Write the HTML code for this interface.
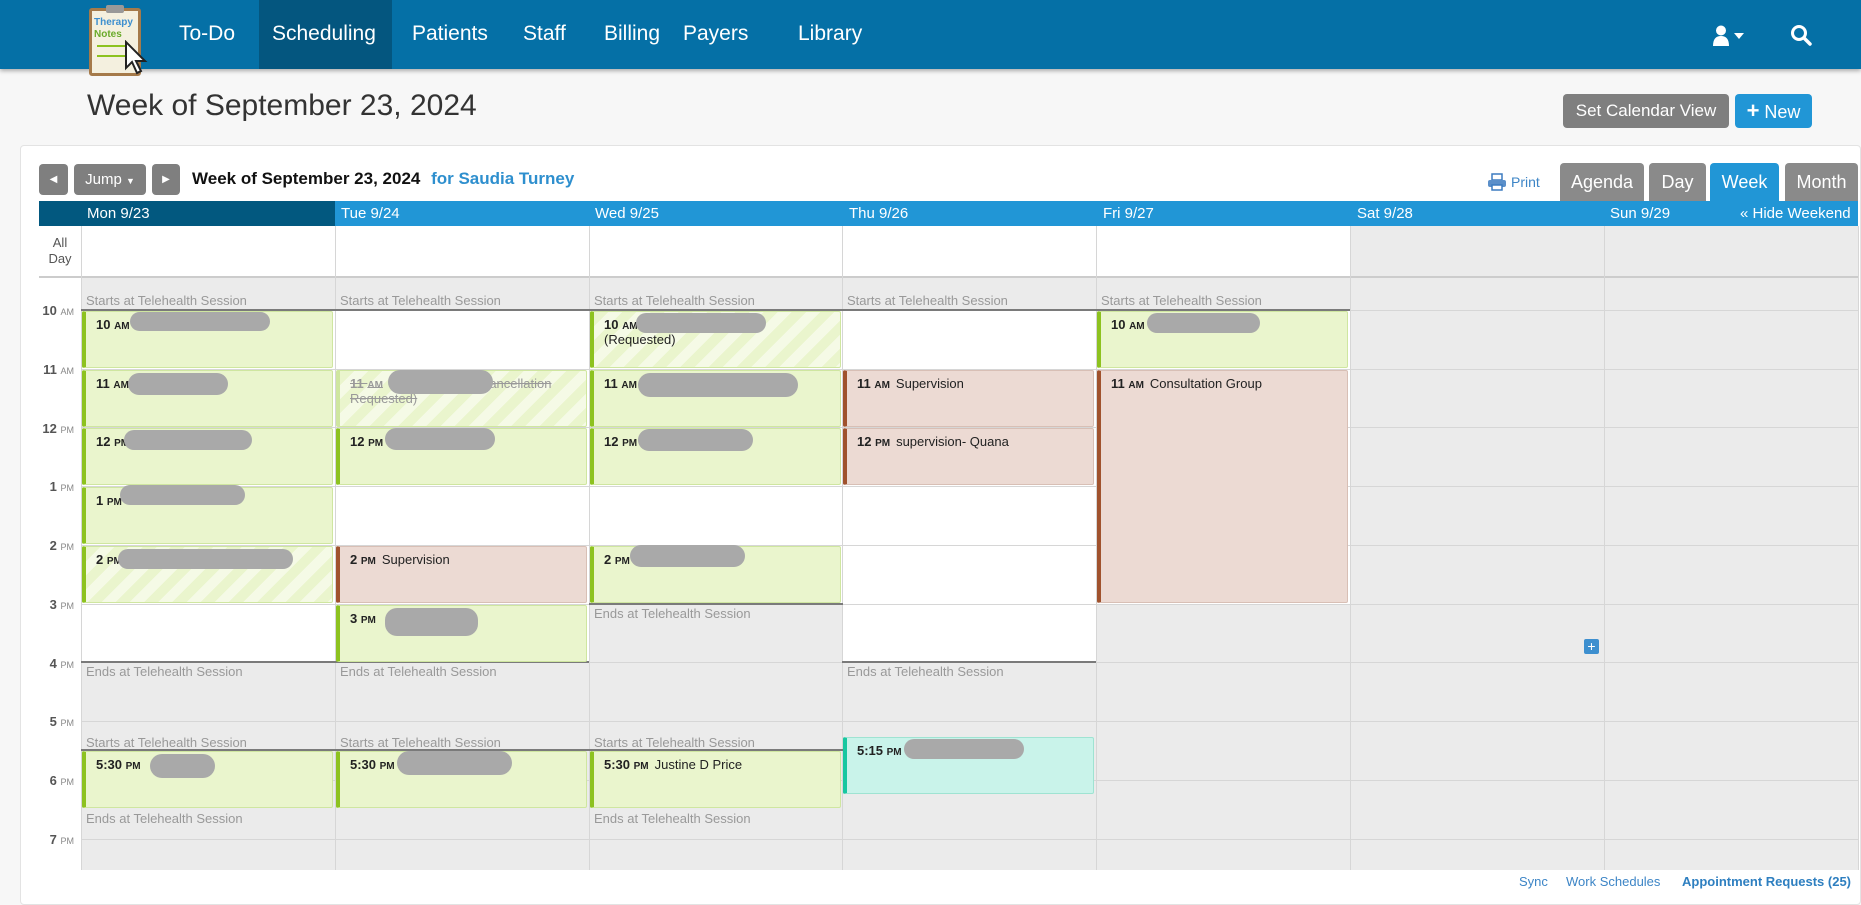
<!DOCTYPE html>
<html><head><meta charset="utf-8"><style>
*{margin:0;padding:0;box-sizing:border-box}
body{width:1861px;height:894px;overflow:hidden;background:#f7f7f7;font-family:"Liberation Sans",Arial,sans-serif;position:relative;color:#222}
.a{position:absolute}
.nav{left:0;top:0;width:1861px;height:69px;background:#0570a6;box-shadow:0 2px 4px rgba(0,0,0,.3)}
.nav .it{position:absolute;top:22px;color:#fff;font-size:21px}
.card{left:20px;top:145px;width:1841px;height:760px;background:#fff;border:1px solid #e3e3e3;border-radius:4px}
.btn{position:absolute;background:#7f7f7f;color:#fff;border-radius:4px;font-size:15px;text-align:center}
.tab{position:absolute;top:163px;height:38px;background:#8a8a8a;color:#fff;font-size:18px;text-align:center;line-height:38px;border-radius:4px 4px 0 0}
.hd{position:absolute;top:201px;height:25px;color:#fff;font-size:15px;line-height:25px}
.vl{position:absolute;width:1px;background:#d6d6d6}
.hl{position:absolute;height:1px;background:#d6d6d6}
.wh{position:absolute;background:#fff;width:253px}
.dk{position:absolute;height:2px;background:#7a7a7a;width:254px}
.lb{position:absolute;color:#999;font-size:13px;white-space:nowrap}
.hr{position:absolute;left:40px;font-size:13px;color:#555;width:34px;text-align:right}
.hr small{font-size:9px;color:#888}
.ev{position:absolute;width:251px;height:57px;font-size:13px;padding:5px 0 0 10px;border:1px solid #cfe6a0;border-left:4px solid #8dc21f;background:#eaf5cd;border-radius:2px;overflow:hidden}
.ev b{font-size:13px;margin-right:6px}
.ev b small{font-size:10px}
.st{background:repeating-linear-gradient(135deg,#eaf5cd 0 10px,#f4faе4 10px 20px);background:repeating-linear-gradient(135deg,#eaf5cd 0 10px,#f5fae6 10px 20px)}
.br{background:#ecdad3;border-color:#d8bfb5;border-left-color:#a0522d}
.tl{background:#c9f3ea;border-color:#9fe3d2;border-left-color:#17c7a0}
.bl{position:absolute;background:#a9a9a9;border-radius:12px;height:18px}
</style></head><body>
<div class="a nav">
 <div class="a" style="left:259px;top:0;width:133px;height:69px;background:#04567f"></div>
 <div class="a" style="left:89px;top:8px;width:52px;height:68px;background:#f4f0df;border:3px solid #a57a4a;border-radius:3px">
  <div class="a" style="left:14px;top:-6px;width:18px;height:8px;background:#999;border-radius:2px"></div>
  <div class="a" style="left:2px;top:6px;font-size:10px;color:#3d8fcf;font-weight:bold;line-height:12px">Therapy<br><span style="color:#6aaa2a">Notes</span></div>
  <div class="a" style="left:5px;top:34px;width:30px;height:2px;background:#8dc21f"></div>
  <div class="a" style="left:5px;top:44px;width:30px;height:2px;background:#8dc21f"></div>
 </div>
 <svg class="a" style="left:124px;top:40px" width="26" height="36" viewBox="0 0 26 36"><path d="M2 2 L2 28 L8 22 L13 33 L17 31 L12 21 L21 21 Z" fill="#fff" stroke="#222" stroke-width="2"/></svg>
 <div class="it" style="left:179px">To-Do</div>
 <div class="it" style="left:272px">Scheduling</div>
 <div class="it" style="left:412px">Patients</div>
 <div class="it" style="left:523px">Staff</div>
 <div class="it" style="left:604px">Billing</div>
 <div class="it" style="left:683px">Payers</div>
 <div class="it" style="left:798px">Library</div>
 <svg class="a" style="left:1712px;top:25px" width="36" height="22" viewBox="0 0 36 22"><circle cx="9" cy="5.5" r="5" fill="#fff"/><path d="M1 21 Q1 11 9 11 Q17 11 17 21 Z" fill="#fff"/><path d="M22 8 L32 8 L27 14 Z" fill="#fff"/></svg>
 <svg class="a" style="left:1790px;top:24px" width="22" height="22" viewBox="0 0 22 22"><circle cx="9" cy="9" r="6.5" fill="none" stroke="#fff" stroke-width="3"/><path d="M14 14 L20 20" stroke="#fff" stroke-width="3.5" stroke-linecap="round"/></svg>
</div>
<div class="a" style="left:87px;top:89px;font-size:30px;color:#333;font-weight:300">Week of September 23, 2024</div>
<div class="btn" style="left:1563px;top:94px;width:166px;height:34px;line-height:34px;font-size:17px">Set Calendar View</div>
<div class="btn" style="left:1735px;top:94px;width:77px;height:34px;line-height:34px;font-size:18px;background:#2196d6"><b style="font-size:22px">+</b> New</div>
<div class="a card"></div>
<div class="btn" style="left:39px;top:164px;width:29px;height:31px;line-height:31px;font-size:10px">&#9664;</div>
<div class="btn" style="left:74px;top:164px;width:72px;height:31px;line-height:31px">Jump <span style="font-size:9px">&#9660;</span></div>
<div class="btn" style="left:152px;top:164px;width:28px;height:31px;line-height:31px;font-size:10px">&#9654;</div>
<div class="a" style="left:192px;top:169px;font-size:17px;font-weight:bold;color:#111">Week of September 23, 2024 <span style="color:#2e8fce;margin-left:6px">for Saudia Turney</span></div>
<svg class="a" style="left:1487px;top:173px" width="20" height="18" viewBox="0 0 20 18"><rect x="5" y="1" width="10" height="6" fill="none" stroke="#3d7cc0" stroke-width="1.5"/><rect x="1" y="7" width="18" height="7" rx="2" fill="#5b8fc9"/><rect x="5" y="12" width="10" height="5" fill="#fff" stroke="#3d7cc0" stroke-width="1.5"/></svg>
<div class="a" style="left:1511px;top:174px;font-size:14px;color:#3d85c6">Print</div>
<div class="tab" style="left:1560px;width:84px">Agenda</div>
<div class="tab" style="left:1649px;width:57px">Day</div>
<div class="tab" style="left:1710px;width:69px;background:#2196d6">Week</div>
<div class="tab" style="left:1785px;width:73px">Month</div>
<div class="a" style="left:39px;top:201px;width:1819px;height:25px;background:#2196d6"></div>
<div class="a" style="left:39px;top:201px;width:296px;height:25px;background:#02587f"></div>
<div class="hd" style="left:87px">Mon 9/23</div><div class="hd" style="left:341px">Tue 9/24</div><div class="hd" style="left:595px">Wed 9/25</div><div class="hd" style="left:849px">Thu 9/26</div><div class="hd" style="left:1103px">Fri 9/27</div><div class="hd" style="left:1357px">Sat 9/28</div><div class="hd" style="left:1610px">Sun 9/29</div>
<div class="hd" style="left:1740px">&laquo; Hide Weekend</div>
<div class="a" style="left:39px;top:226px;width:1819px;height:644px;background:#ebebeb"></div>
<div class="a" style="left:39px;top:226px;width:42px;height:644px;background:#fff"></div>
<div class="a" style="left:81px;top:226px;width:1269px;height:51px;background:#fff"></div>
<div class="a" style="left:45px;top:235px;font-size:13px;color:#555;text-align:center;width:30px;line-height:16px">All<br>Day</div>
<div class="wh" style="left:82px;top:310px;height:352px"></div>
<div class="wh" style="left:336px;top:310px;height:352px"></div>
<div class="wh" style="left:590px;top:310px;height:294px"></div>
<div class="wh" style="left:843px;top:310px;height:352px"></div>
<div class="wh" style="left:1097px;top:310px;height:294px"></div>
<div class="hl" style="left:39px;top:276px;width:1819px;height:2px;background:#ccc"></div>
<div class="hl" style="left:81px;top:369px;width:1777px"></div><div class="hl" style="left:81px;top:427px;width:1777px"></div><div class="hl" style="left:81px;top:486px;width:1777px"></div><div class="hl" style="left:81px;top:545px;width:1777px"></div><div class="hl" style="left:81px;top:604px;width:1777px"></div><div class="hl" style="left:81px;top:662px;width:1777px"></div><div class="hl" style="left:81px;top:721px;width:1777px"></div><div class="hl" style="left:81px;top:780px;width:1777px"></div><div class="hl" style="left:81px;top:839px;width:1777px"></div>
<div class="hl" style="left:1350px;top:310px;width:508px"></div>
<div class="vl" style="left:81px;top:226px;height:644px"></div><div class="vl" style="left:335px;top:226px;height:644px"></div><div class="vl" style="left:589px;top:226px;height:644px"></div><div class="vl" style="left:842px;top:226px;height:644px"></div><div class="vl" style="left:1096px;top:226px;height:644px"></div><div class="vl" style="left:1350px;top:226px;height:644px"></div><div class="vl" style="left:1604px;top:226px;height:644px"></div><div class="vl" style="left:1858px;top:226px;height:644px"></div>
<div class="dk" style="left:81px;top:309px"></div><div class="dk" style="left:335px;top:309px"></div><div class="dk" style="left:589px;top:309px"></div><div class="dk" style="left:842px;top:309px"></div><div class="dk" style="left:1096px;top:309px"></div>
<div class="dk" style="left:81px;top:661px"></div><div class="dk" style="left:335px;top:661px"></div><div class="dk" style="left:842px;top:661px"></div><div class="dk" style="left:589px;top:603px"></div>
<div class="dk" style="left:81px;top:749px"></div><div class="dk" style="left:335px;top:749px"></div><div class="dk" style="left:589px;top:749px"></div>
<div class="lb" style="left:86px;top:293px">Starts at Telehealth Session</div><div class="lb" style="left:340px;top:293px">Starts at Telehealth Session</div><div class="lb" style="left:594px;top:293px">Starts at Telehealth Session</div><div class="lb" style="left:847px;top:293px">Starts at Telehealth Session</div><div class="lb" style="left:1101px;top:293px">Starts at Telehealth Session</div>
<div class="lb" style="left:86px;top:664px">Ends at Telehealth Session</div><div class="lb" style="left:340px;top:664px">Ends at Telehealth Session</div><div class="lb" style="left:847px;top:664px">Ends at Telehealth Session</div><div class="lb" style="left:594px;top:606px">Ends at Telehealth Session</div>
<div class="lb" style="left:86px;top:735px">Starts at Telehealth Session</div><div class="lb" style="left:340px;top:735px">Starts at Telehealth Session</div><div class="lb" style="left:594px;top:735px">Starts at Telehealth Session</div>
<div class="lb" style="left:86px;top:811px">Ends at Telehealth Session</div><div class="lb" style="left:594px;top:811px">Ends at Telehealth Session</div>
<div class="hr" style="top:303px"><b>10</b> <small>AM</small></div><div class="hr" style="top:362px"><b>11</b> <small>AM</small></div><div class="hr" style="top:421px"><b>12</b> <small>PM</small></div><div class="hr" style="top:479px"><b>1</b> <small>PM</small></div><div class="hr" style="top:538px"><b>2</b> <small>PM</small></div><div class="hr" style="top:597px"><b>3</b> <small>PM</small></div><div class="hr" style="top:656px"><b>4</b> <small>PM</small></div><div class="hr" style="top:714px"><b>5</b> <small>PM</small></div><div class="hr" style="top:773px"><b>6</b> <small>PM</small></div><div class="hr" style="top:832px"><b>7</b> <small>PM</small></div>
<div class="ev" style="left:82px;top:311px"><b>10 <small>AM</small></b></div>
<div class="ev" style="left:82px;top:370px"><b>11 <small>AM</small></b></div>
<div class="ev" style="left:82px;top:428px"><b>12 <small>PM</small></b></div>
<div class="ev" style="left:82px;top:487px"><b>1 <small>PM</small></b></div>
<div class="ev st" style="left:82px;top:546px"><b>2 <small>PM</small></b></div>
<div class="ev st" style="left:336px;top:370px;color:#999;text-decoration:line-through;border-left-color:#cfe6a0"><b>11 <small>AM</small></b> &nbsp; &nbsp; &nbsp; &nbsp; &nbsp; &nbsp; &nbsp; &nbsp; &nbsp; &nbsp; &nbsp; &nbsp;(Cancellation<br>Requested)</div>
<div class="ev" style="left:336px;top:428px"><b>12 <small>PM</small></b></div>
<div class="ev br" style="left:336px;top:546px"><b>2 <small>PM</small></b>Supervision</div>
<div class="ev" style="left:336px;top:605px"><b>3 <small>PM</small></b></div>
<div class="ev st" style="left:590px;top:311px"><b>10 <small>AM</small></b><br>(Requested)</div>
<div class="ev" style="left:590px;top:370px"><b>11 <small>AM</small></b></div>
<div class="ev" style="left:590px;top:428px"><b>12 <small>PM</small></b></div>
<div class="ev" style="left:590px;top:546px"><b>2 <small>PM</small></b></div>
<div class="ev br" style="left:843px;top:370px"><b>11 <small>AM</small></b>Supervision</div>
<div class="ev br" style="left:843px;top:428px"><b>12 <small>PM</small></b>supervision- Quana</div>
<div class="ev tl" style="left:843px;top:737px"><b>5:15 <small>PM</small></b></div>
<div class="ev" style="left:1097px;top:311px"><b>10 <small>AM</small></b></div>
<div class="ev br" style="left:1097px;top:370px;height:233px"><b>11 <small>AM</small></b>Consultation Group</div>
<div class="ev" style="left:82px;top:751px"><b>5:30 <small>PM</small></b></div>
<div class="ev" style="left:336px;top:751px"><b>5:30 <small>PM</small></b></div>
<div class="ev" style="left:590px;top:751px"><b>5:30 <small>PM</small></b>Justine D Price</div>
<div class="bl" style="left:130px;top:312px;width:140px;height:19px"></div>
<div class="bl" style="left:128px;top:373px;width:100px;height:22px"></div>
<div class="bl" style="left:124px;top:430px;width:128px;height:20px"></div>
<div class="bl" style="left:120px;top:485px;width:125px;height:20px"></div>
<div class="bl" style="left:118px;top:549px;width:175px;height:20px"></div>
<div class="bl" style="left:388px;top:370px;width:105px;height:24px"></div>
<div class="bl" style="left:385px;top:428px;width:110px;height:22px"></div>
<div class="bl" style="left:385px;top:608px;width:93px;height:28px"></div>
<div class="bl" style="left:636px;top:313px;width:130px;height:20px"></div>
<div class="bl" style="left:638px;top:373px;width:160px;height:24px"></div>
<div class="bl" style="left:638px;top:429px;width:115px;height:22px"></div>
<div class="bl" style="left:630px;top:545px;width:115px;height:22px"></div>
<div class="bl" style="left:904px;top:739px;width:120px;height:20px"></div>
<div class="bl" style="left:1147px;top:313px;width:113px;height:20px"></div>
<div class="bl" style="left:150px;top:754px;width:65px;height:24px"></div>
<div class="bl" style="left:397px;top:751px;width:115px;height:24px"></div>
<div class="a" style="left:1584px;top:639px;width:15px;height:15px;background:#3d8fcf;color:#fff;font-size:14px;line-height:14px;text-align:center;border-radius:2px">+</div>
<div class="a" style="left:1519px;top:874px;font-size:13px;color:#3d85c6">Sync</div>
<div class="a" style="left:1566px;top:874px;font-size:13px;color:#3d85c6">Work Schedules</div>
<div class="a" style="left:1682px;top:874px;font-size:13px;color:#2e7fc0;font-weight:bold">Appointment Requests (25)</div>
</body></html>
